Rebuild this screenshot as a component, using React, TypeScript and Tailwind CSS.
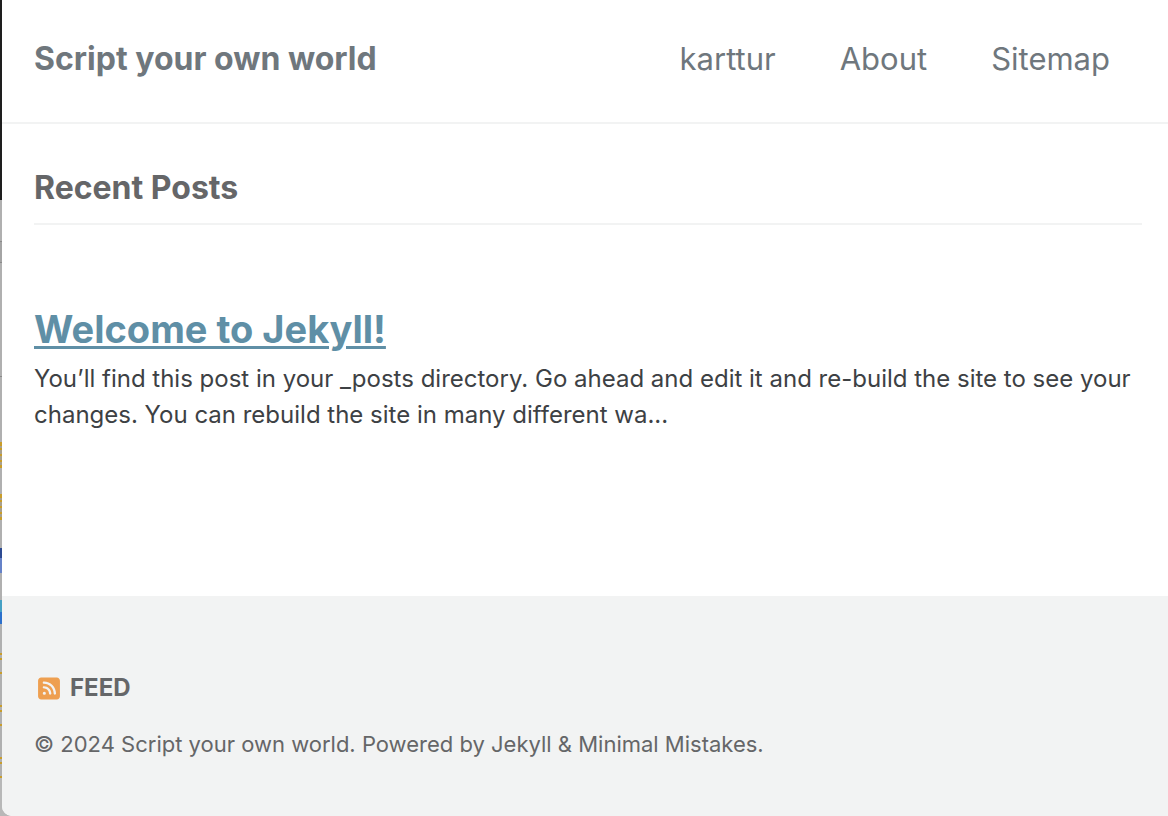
import { FaSquareRss } from "react-icons/fa6";

const navigation = [
  { label: "karttur", href: "#karttur" },
  { label: "About", href: "#about" },
  { label: "Sitemap", href: "#sitemap" },
];

const edgeSegments = [
  "h-[200px] bg-[#1e1e1e]",
  "h-[41px] bg-[#b0b0b0]",
  "h-px bg-[#8a8a8a]",
  "h-5 bg-[#a4a4a4]",
  "h-px bg-[#8a8a8a]",
  "h-[113px] bg-[#b0b0b0]",
  "h-px bg-[#8a8a8a]",
  "h-[65px] bg-[#b0b0b0]",
  "h-1 bg-[#c99d2a]",
  "h-0.5 bg-[#a8a08c]",
  "h-0.5 bg-[#c99d2a]",
  "h-1 bg-[#a8a08c]",
  "h-0.5 bg-[#c99d2a]",
  "h-1 bg-[#a8a08c]",
  "h-0.5 bg-[#c99d2a]",
  "h-[3px] bg-[#a8a08c]",
  "h-[3px] bg-[#c99d2a]",
  "h-[26px] bg-[#b0b0b0]",
  "h-1 bg-[#c99d2a]",
  "h-0.5 bg-[#a8a08c]",
  "h-0.5 bg-[#c99d2a]",
  "h-1 bg-[#a8a08c]",
  "h-0.5 bg-[#c99d2a]",
  "h-1 bg-[#a8a08c]",
  "h-0.5 bg-[#c99d2a]",
  "h-[3px] bg-[#a8a08c]",
  "h-[3px] bg-[#c99d2a]",
  "h-7 bg-[#b0b0b0]",
  "h-[10px] bg-[#2c4a92]",
  "h-[15px] bg-[#6582c8]",
  "h-[27px] bg-[#b0b0b0]",
  "h-3 bg-[#45a0c4]",
  "h-3 bg-[#2c70cc]",
  "h-[29px] bg-[#b0b0b0]",
  "h-0.5 bg-[#c99d2a]",
  "h-[3px] bg-[#b0b0b0]",
  "h-0.5 bg-[#c99d2a]",
  "h-3 bg-[#b0b0b0]",
  "h-0.5 bg-[#c99d2a]",
  "h-[31px] bg-[#b0b0b0]",
  "h-0.5 bg-[#c99d2a]",
  "h-[3px] bg-[#b0b0b0]",
  "h-0.5 bg-[#c99d2a]",
  "h-3 bg-[#b0b0b0]",
  "h-0.5 bg-[#c99d2a]",
  "h-[31px] bg-[#b0b0b0]",
  "h-0.5 bg-[#c99d2a]",
  "h-[3px] bg-[#b0b0b0]",
  "h-0.5 bg-[#c99d2a]",
  "h-3 bg-[#b0b0b0]",
  "h-0.5 bg-[#c99d2a]",
];

export default function App() {
  return (
    <div className="flex min-h-screen bg-[#b8b8b8] font-['Inter',sans-serif]">
      <div className="flex w-0.5 shrink-0 flex-col" aria-hidden="true">
        {edgeSegments.map((segment, index) => (
          <div key={index} className={segment} />
        ))}
      </div>
      <div className="flex min-w-0 grow flex-col rounded-bl-[10px] bg-white">
        <header className="flex items-center justify-between border-b-2 border-[#f2f3f3] pt-10 pr-[58px] pb-11 pl-8 leading-[38px] text-[#6f777d]">
          <a href="#home" className="text-[32px] font-bold">Script your own world</a>
          <nav className="flex gap-16 text-[31px]">
            {navigation.map((item) => (
              <a key={item.label} href={item.href}>{item.label}</a>
            ))}
          </nav>
        </header>
        <main className="grow pt-11 pr-[26px] pl-8">
          <h3 className="border-b-2 border-[#f2f3f3] pb-[15px] text-[32px] leading-10 font-bold text-[#656668]">Recent Posts</h3>
          <article className="pt-20">
            <h2 className="text-[38px] leading-[48px] font-bold text-[#5f8fa6]">
              <a href="#welcome" className="underline decoration-3 underline-offset-3">Welcome to Jekyll!</a>
            </h2>
            <p className="pt-2 text-2xl leading-9 text-[#3d4144]">
              You’ll find this post in your _posts directory. Go ahead and edit it and re-build the site to see your changes. You can rebuild the site in many different wa...
            </p>
          </article>
        </main>
        <footer className="rounded-bl-[10px] bg-[#f2f3f3] pt-[74px] pb-[54px] pl-8 text-[#656668]">
          <a href="#feed" className="flex items-center gap-1.5 text-2xl leading-9 font-bold">
            <FaSquareRss className="h-[25px] w-[30px] text-[#ee9f50]" />
            FEED
          </a>
          <p className="pt-5 text-[22px] leading-9">© 2024 Script your own world. Powered by Jekyll &amp; Minimal Mistakes.</p>
        </footer>
      </div>
    </div>
  );
}
